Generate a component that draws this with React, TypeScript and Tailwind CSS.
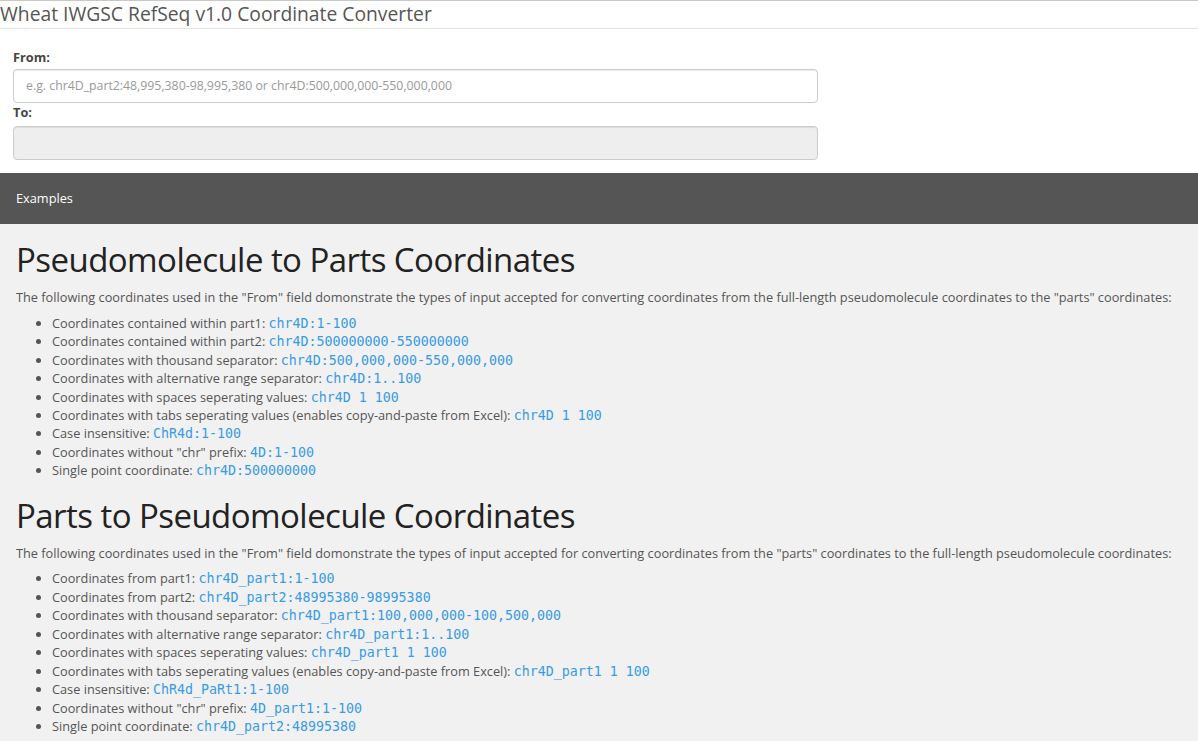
const pseudoToParts: [string, string][] = [
  ["Coordinates contained within part1:", "chr4D:1-100"],
  ["Coordinates contained within part2:", "chr4D:500000000-550000000"],
  ["Coordinates with thousand separator:", "chr4D:500,000,000-550,000,000"],
  ["Coordinates with alternative range separator:", "chr4D:1..100"],
  ["Coordinates with spaces seperating values:", "chr4D 1 100"],
  [
    "Coordinates with tabs seperating values (enables copy-and-paste from Excel):",
    "chr4D 1 100",
  ],
  ["Case insensitive:", "ChR4d:1-100"],
  ['Coordinates without "chr" prefix:', "4D:1-100"],
  ["Single point coordinate:", "chr4D:500000000"],
];

const partsToPseudo: [string, string][] = [
  ["Coordinates from part1:", "chr4D_part1:1-100"],
  ["Coordinates from part2:", "chr4D_part2:48995380-98995380"],
  ["Coordinates with thousand separator:", "chr4D_part1:100,000,000-100,500,000"],
  ["Coordinates with alternative range separator:", "chr4D_part1:1..100"],
  ["Coordinates with spaces seperating values:", "chr4D_part1 1 100"],
  [
    "Coordinates with tabs seperating values (enables copy-and-paste from Excel):",
    "chr4D_part1 1 100",
  ],
  ["Case insensitive:", "ChR4d_PaRt1:1-100"],
  ['Coordinates without "chr" prefix:', "4D_part1:1-100"],
  ["Single point coordinate:", "chr4D_part2:48995380"],
];

function ExampleSection({
  title,
  intro,
  items,
}: {
  title: string;
  intro: string;
  items: [string, string][];
}) {
  return (
    <section>
      <h1 className="text-[33px] leading-[40px] tracking-[-0.55px] text-[#222] mt-[16px] mb-[8px] font-normal">
        {title}
      </h1>
      <p className="mb-[7px] whitespace-nowrap">{intro}</p>
      <ul className="list-disc pl-[36px] mb-[10px]">
        {items.map(([label, code], i) => (
          <li key={i} className="leading-[18.45px]">
            {label}{" "}
            <code className="font-['DejaVu_Sans_Mono',monospace] text-[13.3px] leading-none text-[#379be6] whitespace-pre">
              {code}
            </code>
          </li>
        ))}
      </ul>
    </section>
  );
}

export default function App() {
  return (
    <div className="min-h-screen bg-[#f1f1f1] font-['Open_Sans',sans-serif] text-[12.75px] leading-[18.57px] text-[#555]">
      <div className="bg-white">
        <header className="border-t border-[#c8c8c8] border-b border-b-[#e3e3e3] h-[29px] flex items-center">
          <span className="text-[19.3px] text-[#555] leading-none -mt-[2px]">
            Wheat IWGSC RefSeq v1.0 Coordinate Converter
          </span>
        </header>
        <div className="px-[13px] pt-[19px] pb-[13px] w-[831px]">
          <label className="block font-bold text-[#444] mb-[2px]">From:</label>
          <input
            className="block w-full h-[34px] border border-[#ccc] rounded-[4px] px-[12px] text-[12.3px] text-[#555] placeholder:text-[#999] outline-none shadow-[inset_0_1px_1px_rgba(0,0,0,0.075)]"
            placeholder="e.g. chr4D_part2:48,995,380-98,995,380 or chr4D:500,000,000-550,000,000"
          />
          <label className="block font-bold text-[#444] mb-[5px]">To:</label>
          <input
            disabled
            className="block w-full h-[34px] border border-[#ccc] rounded-[4px] px-[12px] bg-[#eee] shadow-[inset_0_1px_1px_rgba(0,0,0,0.075)]"
          />
        </div>
      </div>
      <div className="bg-[#555] h-[51px] flex items-center px-[16px] text-white">
        Examples
      </div>
      <main className="px-[16px] pb-[10px]">
        <ExampleSection
          title="Pseudomolecule to Parts Coordinates"
          intro={'The following coordinates used in the "From" field domonstrate the types of input accepted for converting coordinates from the full-length pseudomolecule coordinates to the "parts" coordinates:'}
          items={pseudoToParts}
        />
        <ExampleSection
          title="Parts to Pseudomolecule Coordinates"
          intro={'The following coordinates used in the "From" field domonstrate the types of input accepted for converting coordinates from the "parts" coordinates to the full-length pseudomolecule coordinates:'}
          items={partsToPseudo}
        />
      </main>
    </div>
  );
}
